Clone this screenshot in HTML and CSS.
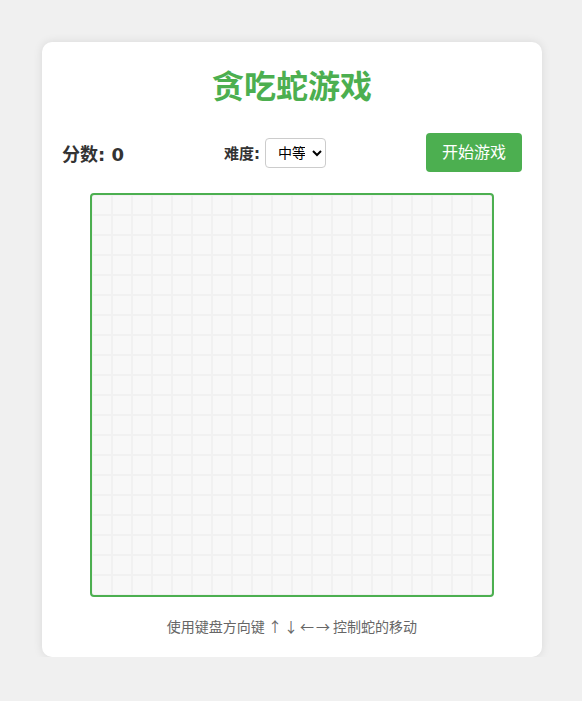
FILE: index.html
```html
<!DOCTYPE html>
<html lang="zh">
<head>
<meta charset="utf-8">
<title>贪吃蛇游戏</title>
<link rel="stylesheet" href="styles.css">
</head>
<body>
<div class="card">
  <h1 class="title">贪吃蛇游戏</h1>
  <div class="controls">
    <div class="score">分数: <span>0</span></div>
    <div class="difficulty">
      <label for="level">难度:</label>
      <select id="level" class="select">
        <option>简单</option>
        <option selected>中等</option>
        <option>困难</option>
      </select>
    </div>
    <button class="start">开始游戏</button>
  </div>
  <div class="board"></div>
  <p class="hint">使用键盘方向键 <span class="arrow">↑</span> <span class="arrow">↓</span> <span class="arrow">←</span> <span class="arrow">→</span> 控制蛇的移动</p>
</div>
</body>
</html>
```

FILE: styles.css
```css
html, body {
  margin: 0;
  padding: 0;
}
body {
  background: #f0f0f0;
  font-family: "DejaVu Sans", "Noto Sans CJK SC", sans-serif;
  color: #333;
  padding-top: 42px;
}
.card {
  width: 460px;
  margin: 0 auto;
  background: #fff;
  border-radius: 10px;
  box-shadow: 0 0 10px rgba(0, 0, 0, 0.1);
  padding: 20px;
  transform: translateX(1px);
}
.title {
  margin: 0 0 21px;
  text-align: center;
  color: #4caf50;
  font-size: 32px;
  line-height: 50px;
  font-weight: bold;
}
.controls {
  display: flex;
  justify-content: space-between;
  align-items: center;
  margin-bottom: 21px;
  height: 39px;
}
.score {
  font-size: 18px;
  font-weight: bold;
  color: #333;
}
.difficulty {
  display: flex;
  align-items: center;
  gap: 5px;
}
.difficulty label {
  font-size: 15px;
  font-weight: bold;
  color: #333;
}
.select {
  height: 30px;
  width: 61px;
  font-size: 14px;
  font-family: "DejaVu Sans", "Noto Sans CJK SC", sans-serif;
  border: 1px solid #ccc;
  border-radius: 4px;
  background: #fff;
  padding: 0 4px 0 8px;
  color: #000;
}
.start {
  background: #4caf50;
  color: #fff;
  border: none;
  border-radius: 4px;
  font-size: 16px;
  line-height: 19px;
  padding: 10px 16px;
  font-family: "DejaVu Sans", "Noto Sans CJK SC", sans-serif;
  cursor: pointer;
}
.board {
  width: 400px;
  height: 400px;
  margin: 0 auto;
  border: 2px solid #4caf50;
  border-radius: 4px;
  background-color: #f8f8f8;
  background-image:
    linear-gradient(to right, #f1f1f1 2px, transparent 2px),
    linear-gradient(to bottom, #f1f1f1 2px, transparent 2px);
  background-size: 20px 20px;
  background-position: 19px 19px;
}
.hint {
  margin: 20px 0 0;
  text-align: center;
  font-size: 14px;
  line-height: 20px;
  color: #666;
}
.arrow {
  font-family: "Noto Sans CJK SC", sans-serif;
  margin: 0 -1.25px;
  line-height: 1;
}
```
